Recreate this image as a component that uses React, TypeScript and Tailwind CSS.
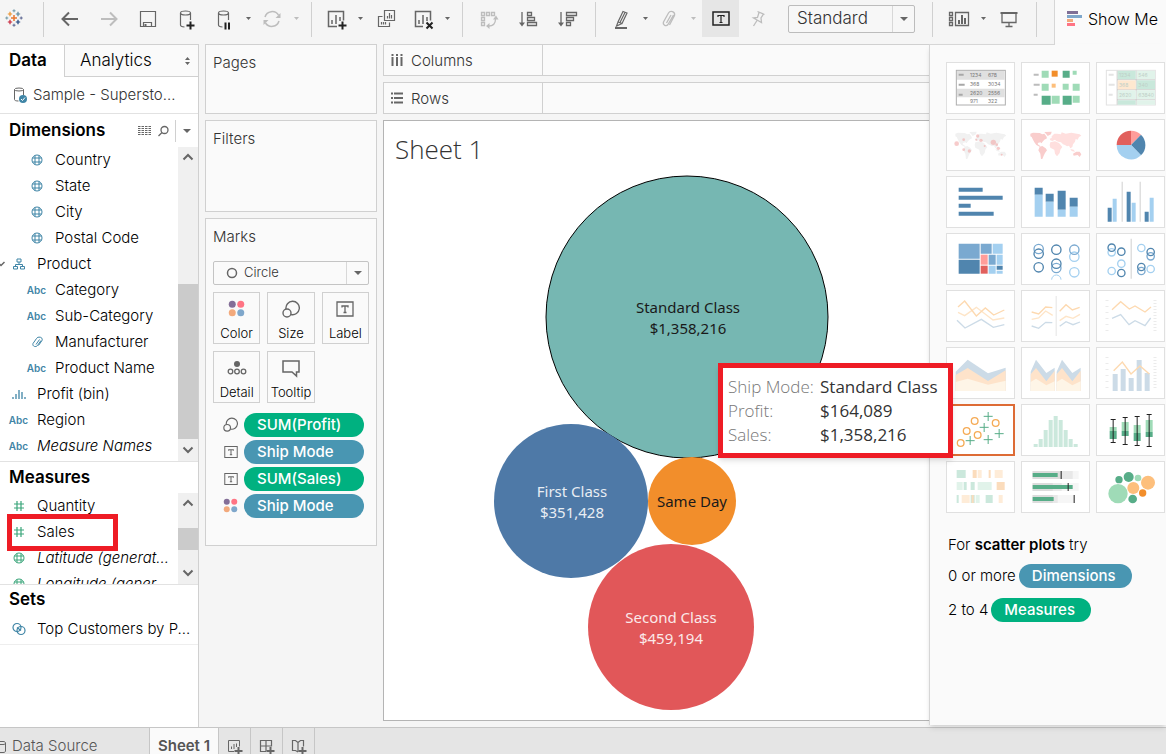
import type { ReactNode } from "react";

const GREY = "#666666";
const PALE = "#bdbdbd";
const BLUE = "#3f85a6";
const GREEN = "#3aa57a";

// ---------- small shared pieces ----------

function Svg({ size = 24, color = GREY, width = 1.5, children }: { size?: number; color?: string; width?: number; children: ReactNode }) {
  return (
    <svg width={size} height={size} viewBox={`0 0 ${size} ${size}`} fill="none" stroke={color} strokeWidth={width} className="shrink-0" aria-hidden="true">
      {children}
    </svg>
  );
}

function Caret({ color = GREY }: { color?: string }) {
  return (
    <svg width="8" height="4" viewBox="0 0 8 4" fill={color} aria-hidden="true">
      <path d="M0 0h8L4 4z" />
    </svg>
  );
}

function Tool({ label, children }: { label: string; children: ReactNode }) {
  return (
    <button aria-label={label} className="flex h-[37px] w-[39px] shrink-0 items-center justify-center">
      {children}
    </button>
  );
}

// tool button with its little drop-down arrow
function SplitTool({ label, color, children }: { label: string; color?: string; children: ReactNode }) {
  return (
    <div className="flex h-[37px] shrink-0 items-center">
      <button aria-label={label} className="flex w-9 items-center justify-center">
        {children}
      </button>
      <button aria-label={`${label} options`} className="flex w-3 justify-center">
        <svg width="5" height="3" viewBox="0 0 5 3" fill={color ?? GREY} aria-hidden="true">
          <path d="M0 0h5L2.5 3z" />
        </svg>
      </button>
    </div>
  );
}

function Divider() {
  return <div className="mt-0.5 h-[35px] w-px shrink-0 bg-[#d0d0d0]" />;
}

// ---------- toolbar ----------

function Logo() {
  const plus = (x: number, y: number, r: number) => `M${x - r} ${y}h${2 * r}M${x} ${y - r}v${2 * r}`;
  return (
    <Svg size={18} width={1.2}>
      <path d={plus(9, 9, 3)} stroke="#e8762c" strokeWidth="1.5" />
      <path d={plus(5, 5, 2.2)} stroke="#eb912b" />
      <path d={plus(13, 5, 2.2)} stroke="#59879b" />
      <path d={plus(5, 13, 2.2)} stroke="#c72037" />
      <path d={plus(13, 13, 2.2)} stroke="#1f447e" />
      <path d={plus(9, 1.8, 1.5)} stroke="#7199a6" strokeWidth="1" />
      <path d={plus(9, 16.2, 1.5)} stroke="#5b6591" strokeWidth="1" />
      <path d={plus(1.8, 9, 1.5)} stroke="#7199a6" strokeWidth="1" />
      <path d={plus(16.2, 9, 1.5)} stroke="#5b6591" strokeWidth="1" />
    </Svg>
  );
}

function Toolbar() {
  return (
    <header className="flex h-11 shrink-0 bg-[#f5f5f5]">
      <div className="flex h-[35px] w-[43px] shrink-0 items-center pl-[5px]">
        <Logo />
      </div>
      <Divider />
      <div className="w-1.5 shrink-0" />
      <Tool label="Undo">
        <Svg width={2}><path d="M20 12H5M11 5.5L4.5 12L11 18.5" /></Svg>
      </Tool>
      <Tool label="Redo">
        <Svg width={2} color={PALE}><path d="M4 12h15M13 5.5L19.5 12L13 18.5" /></Svg>
      </Tool>
      <Tool label="Save">
        <Svg width={1.2}>
          <path d="M4.5 4.5h15v15h-15zM7.500 19.500v-4h8v4" />
          <path d="M9.500 17v2.500" strokeWidth="2" />
        </Svg>
      </Tool>
      <Tool label="New data source">
        <Svg width={1.2}>
          <ellipse cx="10.5" cy="6" rx="5" ry="2" />
          <path d="M5.5 6v12c0 1 1.5 1.8 4 2M15.5 6v7" />
          <path d="M15.5 14.5v8M11.5 18.5h8" stroke="#222" strokeWidth="2" />
        </Svg>
      </Tool>
      <SplitTool label="Pause updates">
        <Svg width={1.2}>
          <ellipse cx="11.5" cy="6" rx="5" ry="2" />
          <path d="M6.5 6v12c0 1 1.5 1.8 4 2M16.5 6v7" />
          <path d="M13.5 15.5v7M17 15.5v7" stroke="#222" strokeWidth="2" />
        </Svg>
      </SplitTool>
      <SplitTool label="Refresh" color={PALE}>
        <Svg color={PALE}>
          <path d="M5 10a7.5 7.5 0 0 1 13.5-2M19 14a7.5 7.5 0 0 1-13.5 2" />
          <path d="M20.5 6v5h-5zM3.5 18v-5h5z" fill={PALE} stroke="none" />
        </Svg>
      </SplitTool>
      <div className="w-[9px] shrink-0" />
      <Divider />
      <div className="w-1.5 shrink-0" />
      <SplitTool label="New worksheet">
        <Svg>
          <path d="M13 19.5H4.5v-15h15v9M8 17v-4M12 17V8M16 14v-4" />
          <path d="M18.5 14.5v8M14.5 18.5h8" stroke="#222" strokeWidth="2" />
        </Svg>
      </SplitTool>
      <Tool label="Duplicate">
        <Svg width={1.2}>
          <path d="M10.5 3.5h10v10h-10zM8.5 9.5h-4v10h11v-4M13.5 11.5V9M15.5 11.5V6M17.5 11.5V8M7.5 17.5V15M9.5 17.5V15M11.5 17.5V15" />
        </Svg>
      </Tool>
      <SplitTool label="Clear sheet">
        <Svg>
          <path d="M12 19.5H4.5v-15h15v9M8 17v-4M12 17V8M16 14v-4" />
          <path d="M15.5 15.5l6 6M21.5 15.5l-6 6" stroke="#222" strokeWidth="2" />
        </Svg>
      </SplitTool>
      <div className="w-[9px] shrink-0" />
      <Divider />
      <div className="w-1.5 shrink-0" />
      <Tool label="Swap rows and columns">
        <Svg color={PALE} width={1.3}>
          <path d="M4.5 5.5h3v3h-3zM9.5 5.5h3v3h-3zM14.5 5.5h3v3h-3zM4.5 10.5h3v3h-3zM4.5 15.5h3v3h-3zM18.5 12c0 5-2 7-7 7" />
          <path d="M16 12.5l3-4 2.500 4zM12.5 16L9 19l3.5 3z" fill={PALE} stroke="none" />
        </Svg>
      </Tool>
      <Tool label="Sort ascending">
        <Svg width={1.3}>
          <path d="M6 5v12M11.5 5.5h4v3h-4zM11.5 10.5h7v3h-7zM11.5 15.5h9v3h-9z" />
          <path d="M3 15.5h6L6 19.5z" fill={GREY} stroke="none" />
        </Svg>
      </Tool>
      <Tool label="Sort descending">
        <Svg width={1.3}>
          <path d="M6 5v12M11.5 5.5h10v3h-10zM11.5 10.5h7v3h-7zM11.5 15.5h4v3h-4z" />
          <path d="M3 15.5h6L6 19.5z" fill={GREY} stroke="none" />
        </Svg>
      </Tool>
      <div className="w-[9px] shrink-0" />
      <Divider />
      <div className="w-[7px] shrink-0" />
      <SplitTool label="Highlight">
        <Svg width={1.2}>
          <path d="M14 4.5l4 1.5-5 10.5-4-1.5zM9 15l-1.5 4L13 16.5M16 5.5l-5 10" />
          <path d="M6 21h12" strokeWidth="2" />
        </Svg>
      </SplitTool>
      <SplitTool label="Group" color={PALE}>
        <Svg color={PALE} width={1.3}>
          <path d="M16.5 8l-5.5 9.5c-1.8 2.5-5.5.5-4.5-2.5L11.5 6c1.8-3 7-1.5 6 2.5l-5 9.5M14 8l-4.5 8" />
        </Svg>
      </SplitTool>
      <div className="w-[3px] shrink-0" />
      <button aria-label="Show mark labels" aria-pressed="true" className="flex h-[37px] w-[37px] shrink-0 items-center justify-center bg-[#e6e6e6]">
        <Svg color="#222">
          <path d="M4 5h16v13H4z" />
          <path d="M9 10V8.5h6V10M12 8.5v7M10.5 15.5h3" strokeWidth="1.2" />
        </Svg>
      </button>
      <Tool label="Pin">
        <Svg color={PALE} width={1.3}>
          <path d="M10.500 4.500l7 3M12 5.500L10.500 10.500l-4 .5 8 4.500-.5-4.500 2.500-4M10 13.500l-3.500 5.500" />
        </Svg>
      </Tool>
      <div className="relative ml-2.5 mt-[5px] h-7 w-[127px] shrink-0 text-[17px] font-light text-[#333]">
        <select aria-label="Fit" className="h-full w-full appearance-none rounded-xs border border-[#bcbcbc] bg-[#f7f7f7] pl-2">
          <option>Standard</option>
        </select>
        <div className="pointer-events-none absolute inset-y-px right-px flex w-[22px] items-center justify-center border-l border-[#d8d8d8]">
          <Caret />
        </div>
      </div>
      <div className="w-[17px] shrink-0" />
      <Divider />
      <div className="w-2 shrink-0" />
      <SplitTool label="Show cards">
        <Svg width={1.3}>
          <path d="M2.5 5.5h3v3h-3zM2.5 10.5h3v3h-3zM2.5 15.5h3v3h-3zM8.5 5.5h13v13h-13z" />
          <path d="M12 17v-4M15 17V8M18 17v-6" strokeWidth="2" />
        </Svg>
      </SplitTool>
      <Tool label="Presentation mode">
        <Svg width={1.3}>
          <path d="M3.500 6h17" strokeWidth="2" />
          <path d="M5 6v9.500h14V6M12 15.500v4M8.500 19.500h7" />
        </Svg>
      </Tool>
      <div className="w-2 shrink-0" />
      <Divider />
      <button className="ml-auto flex w-28 shrink-0 items-center gap-1.5 border-l border-[#d6d6d6] bg-[#fafafa] pb-[7px] pl-3 text-[16px] font-light whitespace-nowrap text-black">
        <svg width="15" height="15" viewBox="0 0 15 15" aria-hidden="true">
          <path d="M0 0h11v3H0z" fill="#7f6f96" />
          <path d="M0 4h15v3H0z" fill="#7fa7cb" />
          <path d="M0 8h6v3H0z" fill="#f2a97c" />
          <path d="M0 12h8v3H0z" fill="#ff7484" />
        </svg>
        Show Me
      </button>
    </header>
  );
}

// ---------- data pane ----------

function Globe({ color }: { color: string }) {
  return (
    <Svg size={12} color={color} width={1}>
      <circle cx="6" cy="6" r="5" />
      <path d="M1.5 4h9M1.5 8h9M4 1.5v9M8 1.5v9" />
    </Svg>
  );
}

function Abc() {
  return <span className="text-[10px] font-semibold text-[#3f85a6]">Abc</span>;
}

function FieldIcon({ kind }: { kind: string }) {
  if (kind === "geo") return <Globe color={BLUE} />;
  if (kind === "geoMeasure") return <Globe color={GREEN} />;
  if (kind === "abc") return <Abc />;
  if (kind === "number")
    return (
      <Svg size={12} color={GREEN} width={1.2}><path d="M4 1v10M8 1v10M1 4h10M1 8h10" /></Svg>
    );
  if (kind === "group")
    return (
      <Svg size={12} color={BLUE} width={1}>
        <path d="M10 4.500L6.500 9.500c-1.500 2-5.500 1-4.500-2L5.500 2.500c1.500-2.500 7-1.500 5.500 2l-3.500 5M8.500 3.500L5 8.500" />
      </Svg>
    );
  if (kind === "bin")
    return (
      <Svg size={14} color={BLUE} width={1.3}><path d="M1 10v2M4 7v5M7 3v9M10 5v7M13 10v2" /></Svg>
    );
  if (kind === "set")
    return (
      <Svg size={14} color={BLUE} width={1.2}><circle cx="5" cy="5.5" r="4" /><circle cx="9" cy="8.5" r="4" /><path d="M5 5.5L9 8.5" /></Svg>
    );
  return (
    <Svg size={12} color={BLUE} width={1}>
      <path d="M4 1h4v3H4zM6 4v3M2.5 8.5V6.500h7v2M.5 8.500h4v2.500h-4zM7.500 8.500h4v2.500h-4z" />
    </Svg>
  );
}

type Field = { name: string; kind: string; nested?: boolean; italic?: boolean };

const dimensions: Field[] = [
  { name: "Country", kind: "geo", nested: true },
  { name: "State", kind: "geo", nested: true },
  { name: "City", kind: "geo", nested: true },
  { name: "Postal Code", kind: "geo", nested: true },
  { name: "Product", kind: "hierarchy" },
  { name: "Category", kind: "abc", nested: true },
  { name: "Sub-Category", kind: "abc", nested: true },
  { name: "Manufacturer", kind: "group", nested: true },
  { name: "Product Name", kind: "abc", nested: true },
  { name: "Profit (bin)", kind: "bin" },
  { name: "Region", kind: "abc" },
  { name: "Measure Names", kind: "abc", italic: true },
];

const measures: Field[] = [
  { name: "Quantity", kind: "number" },
  { name: "Sales", kind: "number" },
  { name: "Latitude (generat...", kind: "geoMeasure", italic: true },
  { name: "Longitude (gener...", kind: "geoMeasure", italic: true },
];

function FieldRow({ field }: { field: Field }) {
  return (
    <li className={`relative flex h-[26px] items-center whitespace-nowrap text-[15px] font-light text-black ${field.nested ? "pl-[18px]" : ""}`}>
      {field.kind === "hierarchy" && (
        <svg width="5" height="6" viewBox="0 0 5 6" fill="none" stroke={GREY} strokeWidth="1.5" className="absolute left-0" aria-hidden="true">
          <path d="M-2 1.5L1 4.5L4.5 1" />
        </svg>
      )}
      <span className="flex w-[37px] shrink-0 justify-center">
        <FieldIcon kind={field.kind} />
      </span>
      <span className={field.italic ? "italic" : ""}>{field.name}</span>
      {field.name === "Sales" && <span className="absolute -top-[5px] left-[7px] z-10 h-[37px] w-[111px] border-5 border-[#ee1c25]" />}
    </li>
  );
}

function Arrow({ up }: { up?: boolean }) {
  return (
    <Svg size={12} width={2}>
      <path d={up ? "M1.5 8.5L6 4l4.5 4.5" : "M1.5 3.5L6 8l4.5-4.5"} />
    </Svg>
  );
}

function ScrollBar({ children }: { children: ReactNode }) {
  return (
    <div className="flex w-5 shrink-0 flex-col items-center bg-[#f0f0f0]">
      <div className="flex h-5 items-center"><Arrow up /></div>
      <div className="w-full flex-1" />
      {children}
      <div className="flex h-[22px] items-center"><Arrow /></div>
    </div>
  );
}

function DataPane() {
  return (
    <aside className="flex w-[199px] shrink-0 flex-col border-t border-r border-[#d0d0d0] bg-white">
      <div className="flex h-8 shrink-0 text-[17px] text-black">
        <button className="w-16 pl-[9px] text-left font-semibold">Data</button>
        <button className="flex flex-1 items-center justify-between border-b border-l border-[#d0d0d0] bg-[#fafafa] pr-2 pl-[15px] font-light">
          Analytics
          <svg width="5" height="8" viewBox="0 0 5 8" fill={GREY} aria-hidden="true">
            <path d="M0 3h5L2.5 0zM0 5h5L2.5 8z" />
          </svg>
        </button>
      </div>
      <div className="flex h-[37px] shrink-0 items-center gap-[5px] border-b border-[#e2e2e2] pl-3 text-[15px] font-light text-[#333]">
        <Svg size={16} width={1}>
          <ellipse cx="7" cy="2.5" rx="4.5" ry="1.5" />
          <path d="M2.5 2.5v10c0 1 1.5 1.5 4 1.5M11.5 2.5V8" />
          <circle cx="11" cy="12" r="4" fill={BLUE} stroke="none" />
          <path d="M9 12l1.5 1.5L13 10.5" stroke="#fff" />
        </Svg>
        Sample - Supersto...
      </div>
      <div className="flex h-[33px] shrink-0 items-center pl-[9px]">
        <h2 className="flex-1 text-[17px] font-semibold text-black">Dimensions</h2>
        <button aria-label="View data" className="mr-1.5">
          <svg width="13" height="10" viewBox="0 0 13 10" stroke={GREY} aria-hidden="true">
            <path d="M0 .5h13M0 2.5h13M0 4.500h13M0 6.500h13M0 8.500h13" strokeDasharray="2.500 1" />
          </svg>
        </button>
        <button aria-label="Find field">
          <Svg size={12} width={1.3}><circle cx="7.5" cy="5" r="3.5" /><path d="M5 7.5L1.5 11" /></Svg>
        </button>
        <span className="ml-1.5 h-[22px] w-px bg-[#d0d0d0]" />
        <button aria-label="Pane menu" className="flex w-[22px] justify-center"><Caret /></button>
      </div>
      <div className="flex h-[315px] shrink-0 border-b border-[#e2e2e2]">
        <ul className="flex-1">
          {dimensions.map((field) => (
            <FieldRow key={field.name} field={field} />
          ))}
        </ul>
        <ScrollBar>
          <div className="h-[155px] w-full bg-[#cbcbcb]" />
        </ScrollBar>
      </div>
      <h2 className="flex h-[31px] shrink-0 items-center pl-[9px] text-[17px] font-semibold text-black">Measures</h2>
      <div className="flex h-[92px] shrink-0 overflow-hidden border-b border-[#e2e2e2]">
        <ul className="flex-1">
          {measures.map((field) => (
            <FieldRow key={field.name} field={field} />
          ))}
        </ul>
        <ScrollBar>
          <div className="h-[22px] w-full bg-[#cbcbcb]" />
          <div className="h-3 w-full" />
        </ScrollBar>
      </div>
      <h2 className="flex h-[30px] shrink-0 items-center pl-[9px] text-[17px] font-semibold text-black">Sets</h2>
      <ul className="border-b border-[#eee] pt-px pb-0.5">
        <FieldRow field={{ name: "Top Customers by P...", kind: "set" }} />
      </ul>
    </aside>
  );
}

// ---------- shelves and marks card ----------

function Dots({ size, r }: { size: number; r: number }) {
  const near = size / 4;
  const far = size - near;
  return (
    <svg width={size} height={size} viewBox={`0 0 ${size} ${size}`} aria-hidden="true">
      <circle cx={near} cy={near} r={r} fill="#846f98" />
      <circle cx={far} cy={near} r={r} fill="#ff7484" />
      <circle cx={near} cy={far} r={r} fill="#f2a97c" />
      <circle cx={far} cy={far} r={r} fill="#7fa7cb" />
    </svg>
  );
}

function SizeIcon({ size }: { size: number }) {
  return (
    <svg width={size} height={size} viewBox="0 0 18 18" fill="none" stroke={GREY} strokeWidth="1.4" aria-hidden="true">
      <path d="M4 9a6.700 6.700 0 1 1 5 5.500" />
      <circle cx="5" cy="13" r="4" />
    </svg>
  );
}

function LabelIcon({ size }: { size: number }) {
  return (
    <svg width={size} height={size} viewBox="0 0 18 18" fill="none" stroke={GREY} strokeWidth="1.3" aria-hidden="true">
      <path d="M1 2h16v14H1zM6 7.5V6h6v1.5M9 6v6.5M7.5 12.5h3" />
    </svg>
  );
}

const markButtons = [
  { name: "Color", icon: <Dots size={17} r={3.5} /> },
  { name: "Size", icon: <SizeIcon size={18} /> },
  { name: "Label", icon: <LabelIcon size={18} /> },
  {
    name: "Detail",
    icon: (
      <Svg size={20} width={1.3}>
        <circle cx="10" cy="6" r="3" fill={GREY} stroke="none" />
        <circle cx="3.5" cy="13.500" r="2.3" />
        <circle cx="10" cy="13.500" r="2.3" />
        <circle cx="16.5" cy="13.500" r="2.3" />
      </Svg>
    ),
  },
  {
    name: "Tooltip",
    icon: (
      <Svg size={20}><path d="M2 3h16v11h-2.5v4L11 14H2z" /></Svg>
    ),
  },
];

const pills = [
  { text: "SUM(Profit)", color: "bg-[#00b180]", icon: <SizeIcon size={15} /> },
  { text: "Ship Mode", color: "bg-[#4996b2]", icon: <LabelIcon size={14} /> },
  { text: "SUM(Sales)", color: "bg-[#00b180]", icon: <LabelIcon size={14} /> },
  { text: "Ship Mode", color: "bg-[#4996b2]", icon: <Dots size={15} r={3} /> },
];

function Cards() {
  const card = "border border-[#d0d0d0] bg-[#fafafa] px-[7px] text-[15px] font-light text-[#333]";
  return (
    <div className="flex w-[172px] shrink-0 flex-col gap-1.5">
      <section className={`${card} h-[70px] pt-[7px]`}>Pages</section>
      <section className={`${card} h-[92px] pt-[7px]`}>Filters</section>
      <section className={`${card} h-[328px] pt-[7px]`}>
        <h2>Marks</h2>
        <div className="relative mt-3 h-6 text-[13px]">
          <select aria-label="Mark type" className="h-full w-full appearance-none rounded-xs border border-[#c4c4c4] bg-[#fafafa] pt-px pl-[30px]">
            <option>Circle</option>
          </select>
          <span className="pointer-events-none absolute top-1.5 left-[13px]">
            <Svg size={12}><circle cx="6" cy="6" r="4.5" /></Svg>
          </span>
          <div className="pointer-events-none absolute inset-y-px right-px flex w-[22px] items-center justify-center border-l border-[#d8d8d8]">
            <Caret />
          </div>
        </div>
        <div className="mt-[7px] grid grid-cols-3 gap-[7px]">
          {markButtons.map((b) => (
            <button key={b.name} className="flex h-[52px] flex-col items-center justify-between border border-[#d0d0d0] pt-1 text-[13px] font-light text-black">
              <span className="flex h-6 items-center">{b.icon}</span>
              <span className="leading-5">{b.name}</span>
            </button>
          ))}
        </div>
        <ul className="mt-2.5 flex flex-col gap-[3px]">
          {pills.map((p, i) => (
            <li key={i} className="flex h-6 items-center">
              <span className="flex w-[31px] justify-center pl-1">{p.icon}</span>
              <span className={`flex h-6 w-[120px] items-center rounded-full pt-0.5 pl-[13px] text-[15px] font-medium text-white ${p.color}`}>{p.text}</span>
            </li>
          ))}
        </ul>
      </section>
    </div>
  );
}

// ---------- sheet ----------

const bubbles = [
  { name: "Standard Class", value: "$1,358,216", x: 303, y: 149, r: 141, fill: "#76b7b2", ink: "#1a1a1a", tx: 304, ty: 145 },
  { name: "First Class", value: "$351,428", x: 187, y: 333, r: 77, fill: "#4e79a7", ink: "#e8edf3", tx: 188, ty: 329 },
  { name: "Same Day", value: "", x: 308, y: 333, r: 44, fill: "#f28e2b", ink: "#1a1a1a", tx: 308, ty: 339 },
  { name: "Second Class", value: "$459,194", x: 287, y: 459, r: 83, fill: "#e15759", ink: "#fbe9e9", tx: 287, ty: 455 },
];

function BubbleChart() {
  return (
    <svg viewBox="0 0 545 552" className="min-h-0 w-full flex-1" role="img" aria-label="Packed bubbles of sales by ship mode">
      {bubbles.map((b) => (
        <g key={b.name}>
          <circle cx={b.x} cy={b.y} r={b.r} fill={b.fill} stroke={b.r > 100 ? "#000" : "none"} />
          <g fill={b.ink} textAnchor="middle" fontSize="15">
            <text x={b.tx} y={b.ty}>{b.name}</text>
            <text x={b.tx} y={b.ty + 21}>{b.value}</text>
          </g>
        </g>
      ))}
    </svg>
  );
}

function Shelf({ name, icon }: { name: string; icon: ReactNode }) {
  return (
    <div className="flex h-8 shrink-0 border border-r-0 border-[#d0d0d0] bg-[#fafafa] text-[15px] font-light text-[#333]">
      <div className="flex w-[159px] items-center gap-2 border-r border-[#d0d0d0] pl-[7px]">
        {icon}
        <span className="pt-0.5">{name}</span>
      </div>
    </div>
  );
}

function Workspace() {
  return (
    <main className="flex min-w-0 flex-1 flex-col gap-1.5 pb-1.5">
      <Shelf
        name="Columns"
        icon={<Svg size={12} width={2}><path d="M1.5 0v2M1.5 3v9M6 0v2M6 3v9M10.5 0v2M10.5 3v9" /></Svg>}
      />
      <Shelf
        name="Rows"
        icon={<Svg size={12} width={2}><path d="M0 1.5h2M3 1.5h9M0 6h2M3 6h9M0 10.5h2M3 10.5h9" /></Svg>}
      />
      <section className="relative flex min-h-0 flex-1 flex-col border border-r-0 border-[#b4b4b4] bg-white">
        <h1 className="h-[47px] shrink-0 pt-[9px] pl-[11px] font-['Open_Sans',sans-serif] text-[26px] leading-[38px] font-light text-[#333]">Sheet 1</h1>
        <div className="flex min-h-0 flex-1 font-['Noto_Sans',sans-serif]">
          <BubbleChart />
        </div>
        <div className="absolute top-[242px] left-[334px] z-20 grid h-[95px] w-[235px] grid-cols-[92px_1fr] content-center border-5 border-[#ee1c25] bg-white pl-[5px] font-['Open_Sans',sans-serif] text-[17px] leading-6 whitespace-nowrap text-[#333] shadow-md">
          <span className="font-light text-[#787878]">Ship Mode:</span>
          <span className="font-medium">Standard Class</span>
          <span className="font-light text-[#787878]">Profit:</span>
          <span>$164,089</span>
          <span className="font-light text-[#787878]">Sales:</span>
          <span>$1,358,216</span>
        </div>
      </section>
    </main>
  );
}

// ---------- show me ----------

const americas =
  "M2 6L10 3L30 4L38 8L44 6L50 14L52 20L44 24L38 31L36 35L32 32L24 34L26 39L32 43L30 45L20 40L14 32L10 24L6 16L2 14ZM44 1L66 0L64 8L54 13L50 8ZM30 45L38 43L48 50L52 56L46 64L42 72L38 82L34 82L32 66L26 56Z";
const eurasia =
  "M62 26L60 21L66 19L66 14L74 6L82 6L94 8L96 2L108 6L125 3L150 8L155 12L148 16L144 24L138 22L136 30L130 38L128 46L122 50L118 42L112 44L106 40L100 38L94 32L86 30L80 28L76 24L68 28ZM62 32L76 29L88 34L98 46L92 54L90 64L82 74L76 66L74 54L62 48L60 40ZM122 52L132 54L136 60L126 58Z";
const australia = "M130 66L140 60L150 60L155 68L150 76L144 70L132 72Z";

// draws [x, y, width, height] boxes in one fill
function Boxes({ fill, at }: { fill: string; at: number[][] }) {
  return <path fill={fill} d={at.map(([x, y, w, h]) => `M${x} ${y}h${w}v${h}h${-w}z`).join("")} />;
}

function Rings({ color, at, r = 14 }: { color: string; at: number[][]; r?: number }) {
  return (
    <g fill="none" stroke={color} strokeWidth="4">
      {at.map(([x, y], i) => (
        <circle key={i} cx={x} cy={y} r={r} />
      ))}
    </g>
  );
}

function Discs({ fill, at, opacity = 1 }: { fill: string; at: number[][]; opacity?: number }) {
  return (
    <g fill={fill} opacity={opacity}>
      {at.map(([x, y, r], i) => (
        <circle key={i} cx={x} cy={y} r={r} />
      ))}
    </g>
  );
}

function Line({ color, d }: { color: string; d: string }) {
  return <path d={d} fill="none" stroke={color} strokeWidth="4" />;
}

const DB = "#5085ae";
const LB = "#a4d0f0";
const MB = "#7aa9d0";
const DG = "#57ad88";
const LG = "#9fdbb7";

const charts: { name: string; box: string; art: ReactNode }[] = [
  {
    name: "Text table",
    box: "52 40 201 150",
    art: (
      <>
        <rect x="80" y="62" width="147" height="104" fill="#fff" stroke="#aeaeae" strokeWidth="3" />
        <Boxes fill="#e0e0e0" at={[[82, 64, 143, 26], [82, 117, 143, 26]]} />
        <Boxes fill="#a8a8a8" at={[[87, 72, 15, 6], [87, 102, 18, 6], [87, 132, 12, 6]]} />
        <g fontSize="15" fill="#777">
          <text x="121" y="82">1234</text><text x="175" y="82">678</text>
          <text x="121" y="109">368</text><text x="175" y="109">3034</text>
          <text x="121" y="136">2620</text><text x="175" y="136">2556</text>
          <text x="121" y="160">971</text><text x="175" y="160">322</text>
        </g>
      </>
    ),
  },
  {
    name: "Heat map",
    box: "277 40 201 150",
    art: (
      <>
        <Boxes fill="#bcbcbc" at={[[312, 72, 15, 6], [312, 102, 18, 6], [312, 132, 12, 6]]} />
        <Boxes fill={LG} at={[[336, 63, 21, 21], [429, 63, 12, 12], [336, 102, 21, 21], [399, 102, 18, 18], [429, 102, 21, 21], [366, 138, 24, 24], [429, 138, 21, 21]]} />
        <Boxes fill={DG} at={[[399, 63, 21, 21], [336, 138, 27, 27], [399, 138, 27, 27]]} />
        <Boxes fill="#f28e2b" at={[[366, 63, 18, 18]]} />
        <Boxes fill="#fdbf7c" at={[[366, 102, 12, 12]]} />
      </>
    ),
  },
  {
    name: "Highlight table",
    box: "502 40 201 150",
    art: (
      <>
        <rect x="530" y="62" width="147" height="104" fill="#fff" stroke="#e2e2e2" strokeWidth="3" />
        <Boxes fill="#cdc9c9" at={[[561, 63, 3, 102], [563, 89, 113, 3], [563, 119, 113, 3], [563, 149, 113, 3], [618, 63, 3, 102]]} />
        <Boxes fill="#c9e8db" at={[[564, 63, 54, 26], [621, 92, 55, 27], [564, 152, 54, 13]]} />
        <Boxes fill="#e1f3ea" at={[[621, 63, 55, 26], [564, 122, 54, 27], [621, 122, 55, 27], [621, 152, 55, 13]]} />
        <Boxes fill="#fee8d0" at={[[564, 92, 54, 27]]} />
        <Boxes fill="#e4e4e4" at={[[537, 72, 15, 6], [537, 102, 18, 6], [537, 132, 12, 6]]} />
        <g fontSize="15" fill="#bfcfc7">
          <text x="568" y="82">1234</text><text x="626" y="82">546</text>
          <text x="568" y="111">368</text><text x="626" y="111">340</text>
          <text x="568" y="141">2620</text><text x="626" y="141">63840</text>
        </g>
      </>
    ),
  },
  {
    name: "Symbol map",
    box: "52 211 201 150",
    art: (
      <>
        <path d={americas + eurasia + australia} transform="translate(75 246)" fill="#f1f1f1" />
        <Discs fill="#f2aaa9" opacity={0.6} at={[[81, 282, 7], [102, 270, 4], [102, 300, 4], [119, 304, 5], [144, 259, 5], [154, 272, 5], [140, 270, 3], [165, 289, 3], [191, 278, 8], [201, 285, 4], [206, 296, 5], [216, 315, 3]]} />
      </>
    ),
  },
  {
    name: "Map",
    box: "277 211 201 150",
    art: (
      <g transform="translate(300 246)">
        <path d={americas} fill="#f9cdcc" />
        <path d={eurasia} fill="#ffdfde" />
        <path d={australia} fill="#f9cdcc" />
      </g>
    ),
  },
  {
    name: "Pie chart",
    box: "502 211 201 150",
    art: (
      <>
        <path d="M604 286V243a43 43 0 0 0-43 43z" fill="#e1605d" />
        <path d="M604 286V243a43 43 0 0 1 30 12z" fill="#ff9d9a" />
        <path d="M604 286L634 255a43 43 0 0 1 0 62z" fill={DB} />
        <path d="M604 286L634 317a43 43 0 0 1-73-31z" fill={LB} />
      </>
    ),
  },
  {
    name: "Horizontal bars",
    box: "52 382 201 150",
    art: <Boxes fill={DB} at={[[87, 414, 72, 12], [87, 438, 132, 12], [87, 462, 36, 12], [87, 486, 105, 12]]} />,
  },
  {
    name: "Stacked bars",
    box: "277 382 201 150",
    art: (
      <>
        <Boxes fill={DB} at={[[315, 414, 24, 21], [348, 432, 24, 24], [384, 423, 24, 57], [420, 444, 24, 27]]} />
        <Boxes fill={LB} at={[[315, 435, 24, 66], [348, 456, 24, 45], [384, 480, 24, 21], [420, 471, 24, 30]]} />
      </>
    ),
  },
  {
    name: "Side-by-side bars",
    box: "502 382 201 150",
    art: (
      <>
        <Boxes fill="#cfcfcf" at={[[576, 396, 3, 120], [630, 396, 3, 120]]} />
        <Boxes fill={DB} at={[[534, 474, 12, 42], [591, 426, 12, 90], [645, 486, 12, 30]]} />
        <Boxes fill={LB} at={[[549, 447, 12, 69], [606, 459, 12, 57], [660, 444, 12, 72]]} />
      </>
    ),
  },
  {
    name: "Treemap",
    box: "52 553 201 150",
    art: (
      <>
        <Boxes fill={MB} at={[[87, 582, 63, 45], [153, 582, 33, 30], [177, 615, 21, 30]]} />
        <Boxes fill={DB} at={[[87, 630, 63, 42], [201, 648, 18, 12]]} />
        <Boxes fill={LB} at={[[189, 582, 30, 30], [201, 615, 18, 30], [177, 648, 21, 24], [201, 663, 18, 9]]} />
        <Boxes fill="#ff9d9a" at={[[153, 615, 21, 30]]} />
        <Boxes fill="#e1605d" at={[[153, 648, 21, 24]]} />
      </>
    ),
  },
  {
    name: "Circle views",
    box: "277 553 201 150",
    art: (
      <>
        <Rings color={LB} at={[[434, 621], [434, 668]]} />
        <Rings color={MB} at={[[327, 598], [434, 600], [380, 655]]} />
        <Rings color={DB} at={[[327, 612], [327, 653], [380, 600], [380, 642]]} />
        <path d="M366 690a14 14 0 0 1 28 0" fill="none" stroke={LB} strokeWidth="3" />
      </>
    ),
  },
  {
    name: "Side-by-side circles",
    box: "502 553 201 150",
    art: (
      <>
        <Boxes fill="#cfcfcf" at={[[603, 567, 3, 120]]} />
        <Rings r={11} color={LB} at={[[546, 608], [575, 642], [546, 664], [635, 595], [663, 658]]} />
        <Rings r={11} color={MB} at={[[663, 620], [635, 664]]} />
        <Rings r={11} color={DB} at={[[546, 594], [575, 606], [575, 670], [663, 607], [635, 652]]} />
      </>
    ),
  },
  {
    name: "Continuous lines",
    box: "52 33 201 150",
    art: (
      <>
        <Line color="#fee5c8" d="M85 97l20 10 35-25 50 38 34-6" />
        <Line color="#fdd9b0" d="M85 81l20-18 35 45 27-24 25 21 32-15" />
        <Line color="#ccdbe7" d="M82 121l24 23 49-26 36 24 33-8" />
      </>
    ),
  },
  {
    name: "Discrete lines",
    box: "277 33 201 150",
    art: (
      <>
        <Boxes fill="#e4e4e4" at={[[378, 48, 3, 120]]} />
        <Line color="#fee5c8" d="M306 118l21-4 21-21 21 13M390 122l19-13 21 6 21-12" />
        <Line color="#fdd9b0" d="M306 96l21 6 21-21 20 2M390 94l19-20 19 16 22-8" />
        <Line color="#ccdbe7" d="M306 138l21 7 21-18 20 1M390 139l19-14 21 9 21-8" />
      </>
    ),
  },
  {
    name: "Dual lines",
    box: "502 33 201 150",
    art: (
      <>
        <path d="M532 60v96" stroke="#ebebeb" strokeWidth="9" strokeDasharray="3 15" />
        <path d="M676 60v96" stroke="#ebebeb" strokeWidth="9" strokeDasharray="3 6" />
        <Line color="#fdd9b0" d="M547 89l26-24 26 22 17-9 30 18 18-15" />
        <Line color="#ccdbe7" d="M547 115l26-11 25 30 18-12 30 15 17-23" />
      </>
    ),
  },
  {
    name: "Area chart",
    box: "52 204 201 150",
    art: (
      <>
        <path d="M78 275l36-36 61 41 53-17v70H78z" fill="#ccdbe7" />
        <path d="M78 285l36-21 61 39 53-32v62H78z" fill="#fee3ca" />
        <path d="M78 306l36-10 61 18 53-12v31H78z" fill="#fef5e7" />
      </>
    ),
  },
  {
    name: "Discrete area chart",
    box: "277 204 201 150",
    art: (
      <>
        {[0, 78].map((dx) => (
          <g key={dx} transform={`translate(${dx} 0)`}>
            <path d="M303 275l16-36 31 40 25-16v70h-72z" fill="#ccdbe7" />
            <path d="M303 283l16-19 31 40 25-32v61h-72z" fill="#fee3ca" />
            <path d="M303 306l16-10 31 20 25-12v29h-72z" fill="#fef5e7" />
          </g>
        ))}
      </>
    ),
  },
  {
    name: "Dual combination",
    box: "502 204 201 150",
    art: (
      <>
        <path d="M532 231v96" stroke="#ebebeb" strokeWidth="9" strokeDasharray="3 15" />
        <path d="M676 231v96" stroke="#ebebeb" strokeWidth="9" strokeDasharray="3 6" />
        <Boxes fill="#ccdbe7" at={[[549, 282, 15, 51], [573, 267, 15, 66], [597, 294, 15, 39], [621, 240, 15, 93], [645, 279, 15, 54]]} />
        <Line color="#fdd9b0" d="M552 272l26-26 26 36 27-24 28 24" />
      </>
    ),
  },
  {
    name: "Scatter plot",
    box: "52 375 201 150",
    art: (
      <>
        <Rings r={10} color="#f5ab55" at={[[135, 423], [198, 429], [111, 453], [144, 465], [93, 489]]} />
        <path
          d="M162 409h27M175.5 396v27M150 442h27M163.5 429v27M195 461h27M208.5 447v27M162 479h27M175.5 465v27M108 482h27M121.5 468v27"
          stroke={DG}
          strokeWidth="3"
        />
      </>
    ),
  },
  {
    name: "Histogram",
    box: "277 375 201 150",
    art: (
      <Boxes
        fill="#cbe8dc"
        at={[[312, 492, 12, 9], [327, 477, 12, 24], [342, 450, 12, 51], [357, 420, 12, 81], [372, 408, 12, 93], [387, 420, 12, 81], [402, 450, 12, 51], [417, 477, 12, 24], [432, 492, 12, 9]]}
      />
    ),
  },
  {
    name: "Box-and-whisker plot",
    box: "502 375 201 150",
    art: (
      <>
        <Boxes fill={LG} at={[[540, 441, 21, 12], [576, 426, 21, 27], [612, 435, 21, 24], [648, 420, 21, 36]]} />
        <Boxes fill={DG} at={[[540, 453, 21, 24], [576, 453, 21, 15], [612, 459, 21, 24], [648, 456, 21, 15]]} />
        <path
          d="M543 418.5h15M550.5 418v69M543 487.5h15M579 412.5h15M586.5 412v81M579 493.5h15M615 409.5h15M622.5 409v87M615 496.5h15M651 403.5h15M658.5 403v96M651 499.5h15"
          stroke="#222"
          strokeWidth="3"
        />
      </>
    ),
  },
  {
    name: "Gantt chart",
    box: "52 546 201 150",
    art: (
      <>
        <Boxes fill="#cbe8dc" at={[[81, 570, 27, 24], [102, 606, 9, 24], [81, 645, 6, 24], [123, 645, 12, 24], [168, 645, 21, 24], [123, 606, 12, 24]]} />
        <Boxes fill="#e1f3ea" at={[[81, 606, 18, 24], [144, 606, 42, 24], [138, 645, 12, 24]]} />
        <Boxes fill="#fbdcbc" at={[[129, 570, 12, 24], [177, 570, 6, 24], [201, 606, 24, 24], [126, 645, 6, 24]]} />
        <Boxes fill="#feecd8" at={[[144, 570, 12, 24], [195, 570, 24, 24], [96, 645, 24, 24], [207, 645, 12, 24]]} />
      </>
    ),
  },
  {
    name: "Bullet graph",
    box: "277 546 201 150",
    art: (
      <>
        <Boxes fill="#f6f6f6" at={[[309, 573, 138, 24], [309, 609, 138, 24], [309, 645, 126, 24]]} />
        <Boxes fill="#e8e8e8" at={[[309, 573, 120, 24], [309, 609, 87, 24], [309, 645, 75, 24]]} />
        <Boxes fill="#dcdcdc" at={[[309, 573, 87, 24], [309, 609, 60, 24], [309, 645, 60, 24]]} />
        <Boxes fill={DG} at={[[309, 579, 75, 12], [309, 615, 120, 12], [309, 651, 63, 12]]} />
        <Boxes fill="#222" at={[[393, 573, 3, 24], [414, 609, 3, 24], [432, 645, 3, 24]]} />
      </>
    ),
  },
  {
    name: "Packed bubbles",
    box: "502 546 201 150",
    art: (
      <>
        <Discs fill={LG} at={[[565, 641, 29], [625, 594, 10]]} />
        <Discs fill={DG} at={[[568, 599, 11], [597, 591, 15], [609, 657, 13]]} />
        <Discs fill="#fdbf7c" at={[[611, 624, 18], [655, 608, 21]]} />
        <Discs fill="#f28e2b" at={[[639, 639, 11]]} />
      </>
    ),
  },
];

function ShowMe() {
  return (
    <aside className="z-10 mb-0.5 w-[237px] shrink-0 border-l border-[#d6d6d6] bg-[#fafafa] shadow-md">
      <div className="mr-[111px] border-t border-[#d6d6d6]" />
      <div className="mt-[17px] ml-4 grid grid-cols-[69px_69px_69px] gap-x-1.5 gap-y-[5px]">
        {charts.map((c) => (
          <button
            key={c.name}
            aria-label={c.name}
            className={`flex h-[52px] items-center justify-center bg-white ${c.name === "Scatter plot" ? "border-2 border-[#dd6b35]" : "border border-[#e0e0e0]"}`}
          >
            <svg width="67" height="50" viewBox={c.box} className="shrink-0" aria-hidden="true">
              {c.art}
            </svg>
          </button>
        ))}
      </div>
      <div className="mt-5 ml-[18px] text-[15px] font-light text-black">
        <p className="leading-6">
          For <b className="font-semibold">scatter plots</b> try
        </p>
        <p className="mt-[7px] flex items-center gap-[3px] leading-6">
          0 or more <span className="h-6 rounded-full bg-[#4996b2] pr-4 pl-[13px] font-medium text-white">Dimensions</span>
        </p>
        <p className="mt-2.5 flex items-center gap-[3px] leading-6">
          2 to 4 <span className="h-6 rounded-full bg-[#00b180] pr-4 pl-[13px] font-medium text-white">Measures</span>
        </p>
      </div>
    </aside>
  );
}

// ---------- sheet tabs ----------

function SheetTabs() {
  const add = <path d="M12.5 9v8M8.5 13h8" strokeWidth="2" />;
  const cell = "flex w-8 items-center justify-center border-r border-[#c6c6c6]";
  return (
    <footer className="h-[27px] shrink-0 overflow-hidden border-t border-[#c6c6c6] bg-[#e5e5e5]">
      <nav className="flex h-[37px] text-[15px] text-[#555]">
        <button className="flex w-[150px] items-center gap-1.5 border-r border-[#c6c6c6] font-light">
          <svg width="6" height="12" viewBox="0 0 6 12" fill="none" stroke={GREY} aria-hidden="true">
            <path d="M0 .5h3c1.5 0 2.5.5 2.5 1.5S4.5 3.5 3 3.5H0M5.5 2v8c0 1-1 1.500-2.500 1.500H0" />
          </svg>
          Data Source
        </button>
        <button className="w-[69px] border-r border-[#c6c6c6] bg-[#fafafa] font-semibold">Sheet 1</button>
        <button aria-label="New worksheet" className={cell}>
          <Svg size={18} width={1}><path d="M8 13.5H2.5v-11h11v6M5.5 11V8.5M8 11V6M10.5 9V5.5" />{add}</Svg>
        </button>
        <button aria-label="New dashboard" className={cell}>
          <Svg size={18} width={1.2}><path d="M8 13.5H2.5v-11h11v6M8 2.5v11M2.5 8h11" />{add}</Svg>
        </button>
        <button aria-label="New story" className={cell}>
          <Svg size={18} width={1.2}><path d="M8 14V4.5L5.5 2.5h-3v10h3L8 14M8 4.5l2.5-2h3v6" />{add}</Svg>
        </button>
      </nav>
    </footer>
  );
}

export default function App() {
  return (
    <div className="flex h-screen flex-col overflow-hidden bg-[#f5f5f5] font-['Inter',sans-serif]">
      <Toolbar />
      <div className="flex min-h-0 flex-1">
        <DataPane />
        <div className="flex min-w-0 flex-1 gap-1.5 pl-1.5">
          <Cards />
          <Workspace />
        </div>
        <ShowMe />
      </div>
      <SheetTabs />
    </div>
  );
}
